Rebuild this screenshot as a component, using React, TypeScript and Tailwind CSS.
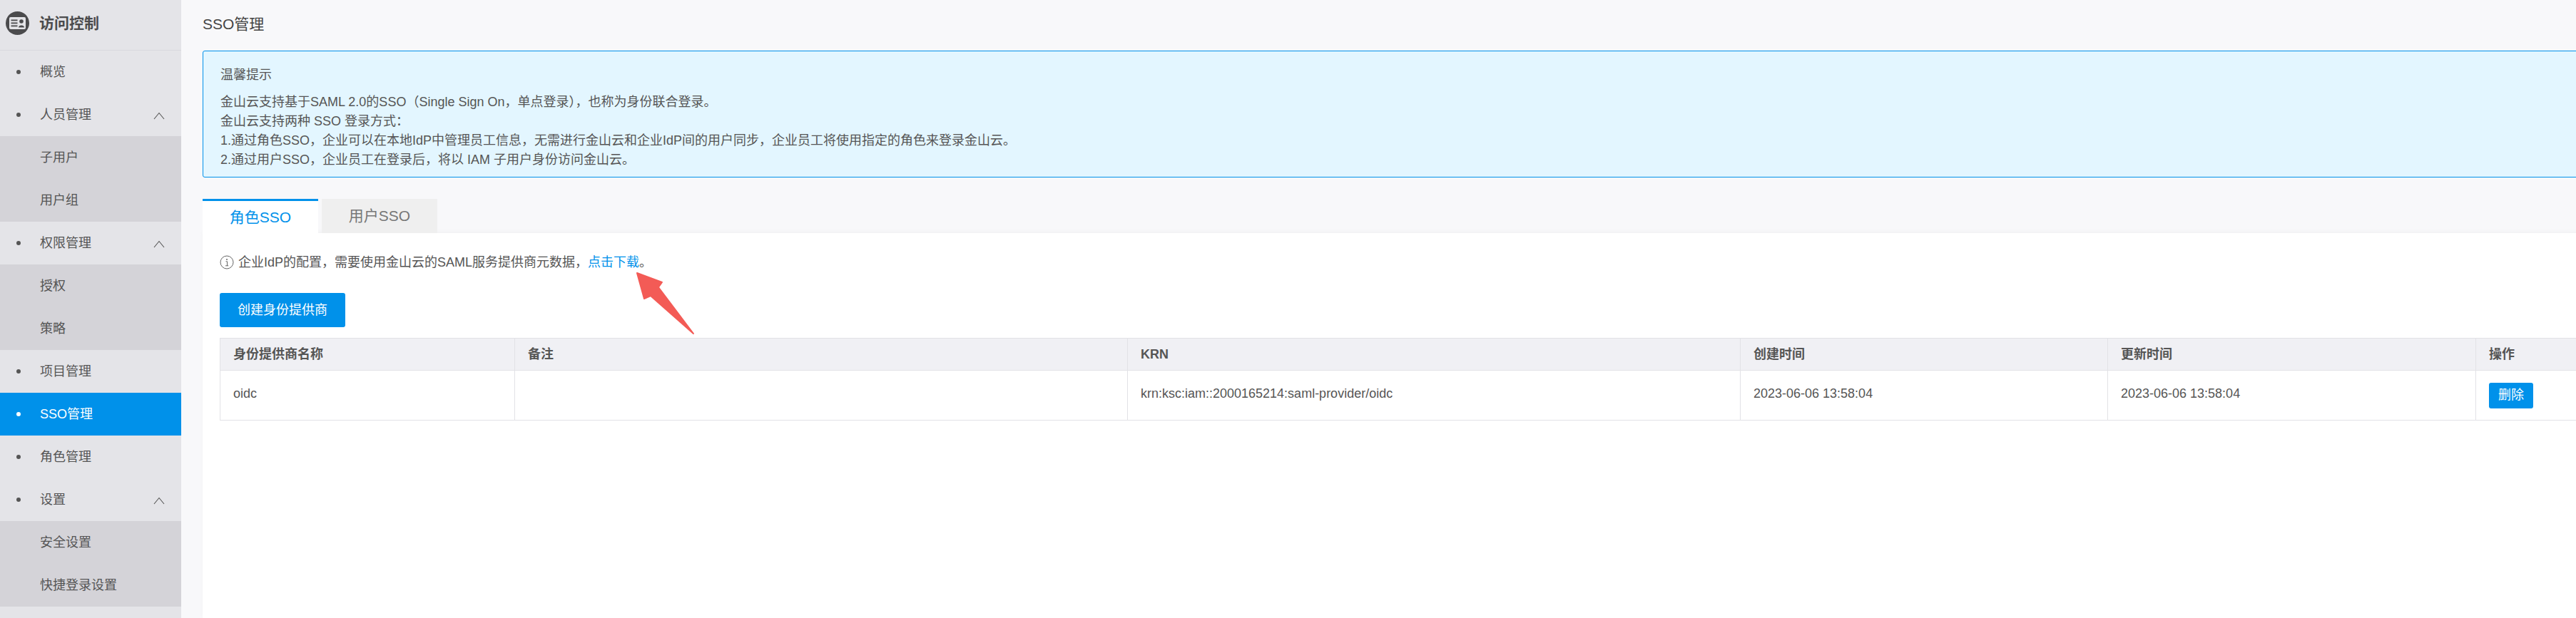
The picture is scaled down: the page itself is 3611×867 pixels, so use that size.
const FONT = "font-['Liberation_Sans','Noto_Sans_CJK_SC',sans-serif]";

const columns = [
  { label: "身份提供商名称", width: "w-[413px]" },
  { label: "备注", width: "w-[859px]" },
  { label: "KRN", width: "w-[859px]" },
  { label: "创建时间", width: "w-[515px]" },
  { label: "更新时间", width: "w-[516px]" },
  { label: "操作", width: "w-[172px]" },
];

function Chevron() {
  return (
    <svg width="16" height="11" viewBox="0 0 16 11" fill="none" className="absolute left-[215px] top-[26px]">
      <polyline points="1,10 8,1.5 15,10" stroke="#555" strokeWidth="1.1" />
    </svg>
  );
}

function MenuItem({ label, active, open }: { label: string; active?: boolean; open?: boolean }) {
  return (
    <div
      className={`relative flex h-[60px] items-center pl-[56px] text-[18px] ${
        active ? "bg-[#0091ea] text-white" : "text-[#555]"
      }`}
    >
      <span
        className={`absolute left-[23px] top-[27px] h-[6px] w-[6px] rounded-full ${
          active ? "bg-white" : "bg-[#555]"
        }`}
      />
      {label}
      {open && <Chevron />}
    </div>
  );
}

function SubMenu({ items }: { items: string[] }) {
  return (
    <div className="bg-[#d4d3d8]">
      {items.map((item) => (
        <div key={item} className="flex h-[60px] items-center pl-[56px] text-[18px] text-[#555]">
          {item}
        </div>
      ))}
    </div>
  );
}

function Sidebar() {
  return (
    <aside className="w-[254px] shrink-0 bg-[#e4e4e8]">
      <div className="flex h-[71px] items-center border-b border-[#d9d9de] pb-[5px] pl-[8px]">
        <svg width="33" height="33" viewBox="0 0 33 33">
          <circle cx="16.5" cy="16.5" r="16.5" fill="#4b4b4d" />
          <rect x="5" y="8" width="23" height="17" rx="2" fill="#e4e4e8" />
          <rect x="7.5" y="11.5" width="9" height="1.8" fill="#4b4b4d" />
          <rect x="7.5" y="15.5" width="9" height="1.8" fill="#4b4b4d" />
          <rect x="7.5" y="19.5" width="9" height="1.8" fill="#4b4b4d" />
          <circle cx="22" cy="14" r="2.8" fill="#4b4b4d" />
          <path d="M18 22.5 C18 18.5 26 18.5 26 22.5 Z" fill="#4b4b4d" />
        </svg>
        <span className="ml-[14px] text-[21px] font-bold text-[#4b4b4d]">访问控制</span>
      </div>
      <MenuItem label="概览" />
      <MenuItem label="人员管理" open />
      <SubMenu items={["子用户", "用户组"]} />
      <MenuItem label="权限管理" open />
      <SubMenu items={["授权", "策略"]} />
      <MenuItem label="项目管理" />
      <MenuItem label="SSO管理" active />
      <MenuItem label="角色管理" />
      <MenuItem label="设置" open />
      <SubMenu items={["安全设置", "快捷登录设置"]} />
    </aside>
  );
}

function Notice() {
  return (
    <div className="h-[178px] w-[3400px] rounded-[3px] border border-[#0091ea] bg-[#e3f6ff] pl-[24px] pt-[20px] text-[18px] leading-[27px] text-[#555]">
      <p className="mb-[11px]">温馨提示</p>
      <p>金山云支持基于SAML 2.0的SSO（Single Sign On，单点登录），也称为身份联合登录。</p>
      <p>金山云支持两种 SSO 登录方式：</p>
      <p>1.通过角色SSO，企业可以在本地IdP中管理员工信息，无需进行金山云和企业IdP间的用户同步，企业员工将使用指定的角色来登录金山云。</p>
      <p>2.通过用户SSO，企业员工在登录后，将以 IAM 子用户身份访问金山云。</p>
    </div>
  );
}

function ProviderTable() {
  return (
    <table className="mt-[15px] w-[3334px] table-fixed border-collapse text-[18px] text-[#555]">
      <thead>
        <tr className="h-[45px] bg-[#f0f0f4]">
          {columns.map((col) => (
            <th key={col.label} className={`${col.width} border border-[#e2e2e6] pl-[18px] text-left font-bold`}>
              {col.label}
            </th>
          ))}
        </tr>
      </thead>
      <tbody>
        <tr className="h-[70px]">
          <td className="border border-[#e2e2e6] pb-[4px] pl-[18px]">oidc</td>
          <td className="border border-[#e2e2e6]" />
          <td className="border border-[#e2e2e6] pb-[4px] pl-[18px]">krn:ksc:iam::2000165214:saml-provider/oidc</td>
          <td className="border border-[#e2e2e6] pb-[4px] pl-[18px]">2023-06-06 13:58:04</td>
          <td className="border border-[#e2e2e6] pb-[4px] pl-[18px]">2023-06-06 13:58:04</td>
          <td className="border border-[#e2e2e6] pl-[18px]">
            <button className="h-[36px] w-[62px] rounded-[3px] bg-[#0091ea] text-[18px] text-white">删除</button>
          </td>
        </tr>
      </tbody>
    </table>
  );
}

export default function App() {
  return (
    <div className={`flex h-[867px] w-[3611px] overflow-hidden bg-[#f8f8fa] ${FONT}`}>
      <Sidebar />
      <main className="relative min-w-0 flex-1 pl-[30px]">
        <h1 className="flex h-[71px] items-center pb-[5px] text-[21px] font-normal leading-none text-[#444]">SSO管理</h1>
        <Notice />

        <div className="mt-[30px] flex gap-[5px] text-[21px]">
          <div className="flex h-[48px] w-[162px] items-center justify-center border-t-[3px] border-[#0091ea] bg-white text-[#0091ea]">
            角色SSO
          </div>
          <div className="flex h-[48px] w-[162px] items-center justify-center bg-[#efefef] text-[#777]">用户SSO</div>
        </div>

        <section className="h-[540px] w-[3400px] bg-white pl-[24px] pt-[29px] shadow-[0_-2px_6px_rgba(0,0,0,0.03)]">
          <div className="flex h-[24px] items-center text-[18px] text-[#555]">
            <svg width="20" height="20" viewBox="0 0 20 20" fill="none" className="mr-[6px]">
              <circle cx="10" cy="10" r="9" stroke="#666" strokeWidth="1" />
              <circle cx="10" cy="6" r="1" fill="#666" />
              <path d="M8.5 8.8h2v6M8 14.8h4.2" stroke="#666" strokeWidth="1" />
            </svg>
            <span>
              企业IdP的配置，需要使用金山云的SAML服务提供商元数据，<a className="text-[#0091ea]">点击下载</a>。
            </span>
          </div>
          <button className="mt-[31px] block h-[48px] w-[176px] rounded-[3px] bg-[#0091ea] text-[18px] text-white">
            创建身份提供商
          </button>
          <ProviderTable />
        </section>

        <svg width="90" height="95" viewBox="0 0 90 95" className="absolute left-[635px] top-[379px]">
          <path
            d="M4 4 L39 17 L34 24 L83 89 L23 36 L14 40 Z"
            fill="#f35b56"
            stroke="#f35b56"
            strokeWidth="2"
            strokeLinejoin="round"
          />
        </svg>
      </main>
    </div>
  );
}
